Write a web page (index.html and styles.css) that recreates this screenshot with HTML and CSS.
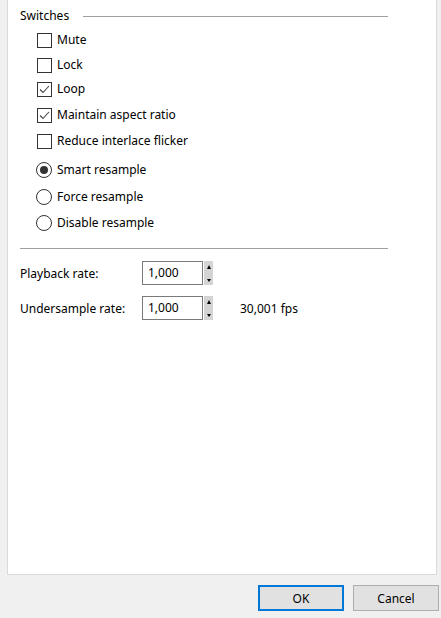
FILE: index.html
```html
<!DOCTYPE html>
<html>
<head>
<meta charset="utf-8">
<link rel="stylesheet" href="styles.css">
</head>
<body>
<div class="panel">
  <div class="group-head"><span class="group-title">Switches</span><span class="group-line"></span></div>
  <div class="options">
    <div class="row r1"><span class="box"></span><span>Mute</span></div>
    <div class="row r2"><span class="box"></span><span>Lock</span></div>
    <div class="row r3"><span class="box"><svg width="13" height="13" viewBox="0 0 13 13"><path d="M2 6.5 L5 9.5 L11 3" fill="none" stroke="#444" stroke-width="1.1"/></svg></span><span>Loop</span></div>
    <div class="row r4"><span class="box"><svg width="13" height="13" viewBox="0 0 13 13"><path d="M2 6.5 L5 9.5 L11 3" fill="none" stroke="#444" stroke-width="1.1"/></svg></span><span>Maintain aspect ratio</span></div>
    <div class="row r5"><span class="box"></span><span>Reduce interlace flicker</span></div>
    <div class="row r6"><span class="radio checked"></span><span>Smart resample</span></div>
    <div class="row r7"><span class="radio"></span><span>Force resample</span></div>
    <div class="row r8"><span class="radio"></span><span>Disable resample</span></div>
  </div>
  <div class="sep"></div>
  <div class="field f1">
    <span class="label">Playback rate:</span>
    <span class="spin"><span class="spin-input">1,000</span><span class="spin-btns"><span class="up"></span><span class="down"></span></span></span>
  </div>
  <div class="field f2">
    <span class="label">Undersample rate:</span>
    <span class="spin"><span class="spin-input">1,000</span><span class="spin-btns"><span class="up"></span><span class="down"></span></span></span>
    <span class="fps">30,001 fps</span>
  </div>
</div>
<div class="footer">
  <button class="btn default">OK</button>
  <button class="btn">Cancel</button>
</div>
</body>
</html>
```
FILE: styles.css
```css
html, body {
  margin: 0;
  padding: 0;
}
body {
  background: #f0f0f0;
  width: 441px;
  height: 618px;
  font-family: "Noto Sans", "Open Sans", sans-serif;
  font-size: 12px;
  color: #000;
  overflow: hidden;
}
.panel {
  box-sizing: border-box;
  margin-left: 7px;
  width: 430px;
  height: 575px;
  background: #fff;
  border: 1px solid #dadada;
  border-top: none;
  padding: 0 48px 0 12px;
  display: flex;
  flex-direction: column;
}
.group-head {
  margin-top: 8px;
  height: 16px;
  display: flex;
  align-items: center;
}
.group-title {
  line-height: 16px;
}
.group-line {
  flex: 1;
  height: 1px;
  background: #a0a0a0;
  margin-left: 14px;
}
.options {
  padding-left: 17px;
  display: flex;
  flex-direction: column;
}
.row {
  height: 16px;
  display: flex;
  align-items: center;
  line-height: 16px;
}
.r1 { margin-top: 8px; }
.r2 { margin-top: 9px; }
.r3 { margin-top: 8px; }
.r4 { margin-top: 10px; }
.r5 { margin-top: 10px; }
.r6 { margin-top: 13px; }
.r7 { margin-top: 11px; }
.r8 { margin-top: 10px; }
.box {
  box-sizing: border-box;
  width: 15px;
  height: 15px;
  border: 1px solid #333;
  margin-right: 5px;
  display: flex;
  align-items: center;
  justify-content: center;
  background: #fff;
}
.radio {
  box-sizing: border-box;
  width: 16px;
  height: 16px;
  border: 1px solid #333;
  border-radius: 50%;
  margin-left: -1px;
  margin-right: 5px;
  display: flex;
  align-items: center;
  justify-content: center;
}
.radio.checked::after {
  content: "";
  width: 8px;
  height: 8px;
  border-radius: 50%;
  background: #333;
}
.sep {
  margin-top: 17px;
  height: 1px;
  background: #a0a0a0;
}
.field {
  display: flex;
  align-items: center;
  height: 24px;
}
.f1 { margin-top: 12px; }
.f2 { margin-top: 11px; }
.label {
  width: 122px;
}
.spin {
  display: flex;
  height: 24px;
}
.spin-input {
  box-sizing: border-box;
  width: 61px;
  height: 24px;
  border: 1px solid #7a7a7a;
  padding-left: 5px;
  line-height: 22px;
}
.spin-btns {
  margin-left: 1px;
  width: 9px;
  height: 24px;
  background: #d4d4d4;
  display: flex;
  flex-direction: column;
  justify-content: space-between;
  align-items: center;
  padding: 4px 0 3px;
  box-sizing: border-box;
}
.up {
  width: 0;
  height: 0;
  border-left: 2.5px solid transparent;
  border-right: 2.5px solid transparent;
  border-bottom: 4px solid #000;
}
.down {
  width: 0;
  height: 0;
  border-left: 2.5px solid transparent;
  border-right: 2.5px solid transparent;
  border-top: 3px solid #000;
}
.fps {
  margin-left: 27px;
}
.footer {
  margin-top: 10px;
  display: flex;
  justify-content: flex-end;
  gap: 9px;
  padding-right: 2px;
}
.btn {
  box-sizing: border-box;
  width: 86px;
  height: 26px;
  background: #e1e1e1;
  border: 1px solid #adadad;
  font-family: inherit;
  font-size: 12px;
  color: #000;
  padding: 0;
  margin: 0;
}
.btn.default {
  border: 2px solid #0078d7;
}
```
